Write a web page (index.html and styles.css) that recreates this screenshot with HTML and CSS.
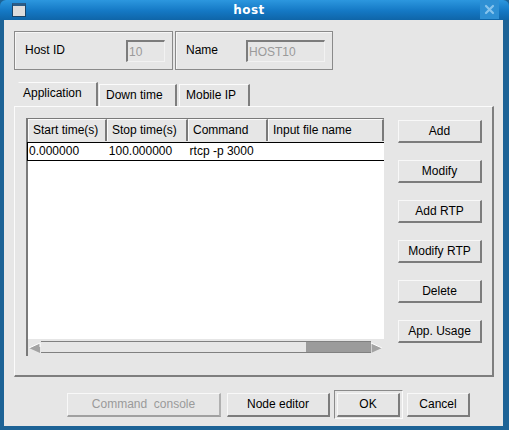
FILE: index.html
```html
<!DOCTYPE html>
<html lang="en">
<head>
  <meta charset="UTF-8" />
  <title>host</title>
  <link rel="stylesheet" href="styles.css">
</head>
<body>
  <div class="window">
    <div class="titlebar">
      <div class="win-icon"></div>
      <div class="title">host</div>
      <div class="close">
        <svg width="11" height="11" viewBox="0 0 11 11">
          <path d="M2 2 L9 9 M9 2 L2 9" stroke="#86c3ec" stroke-width="2.2" stroke-linecap="round" />
        </svg>
      </div>
    </div>

    <div class="content">
      <div class="top-row">
        <div class="group host-id">
          <span class="label">Host ID</span>
          <div class="entry id-entry">10</div>
        </div>
        <div class="group host-name">
          <span class="label">Name</span>
          <div class="entry name-entry">HOST10</div>
        </div>
      </div>

      <div class="tabs">
        <div class="tab selected">Application</div>
        <div class="tab down">Down time</div>
        <div class="tab mobile">Mobile IP</div>
      </div>

      <div class="panel">
        <div class="table">
          <div class="thead">
            <div class="th c1">Start time(s)</div>
            <div class="th c2">Stop time(s)</div>
            <div class="th c3">Command</div>
            <div class="th c4">Input file name</div>
          </div>
          <div class="row">
            <div class="td c1">0.000000</div>
            <div class="td c2">100.000000</div>
            <div class="td c3">rtcp -p 3000</div>
            <div class="td c4"></div>
          </div>
          <div class="filler"></div>
          <div class="hscroll">
            <div class="arrow">
              <svg width="13" height="12" viewBox="0 0 13 12">
                <polygon points="1,6 12,1 12,11" fill="#a3a3a3" />
                <polyline points="1,6 12,1 12,5" fill="none" stroke="#fff" stroke-width="1" />
              </svg>
            </div>
            <div class="trough"><div class="thumb"></div></div>
            <div class="arrow">
              <svg width="12" height="12" viewBox="0 0 12 12">
                <polygon points="11,6 0,1 0,11" fill="#a3a3a3" />
                <polyline points="0,11 0,1 11,6" fill="none" stroke="#fff" stroke-width="1" />
              </svg>
            </div>
          </div>
        </div>

        <div class="side-buttons">
          <div class="btn">Add</div>
          <div class="btn">Modify</div>
          <div class="btn">Add RTP</div>
          <div class="btn">Modify RTP</div>
          <div class="btn">Delete</div>
          <div class="btn">App. Usage</div>
        </div>
      </div>

      <div class="bottom-row">
        <div class="btn wide disabled">Command&nbsp; console</div>
        <div class="btn node">Node editor</div>
        <div class="default-frame"><div class="btn ok">OK</div></div>
        <div class="btn cancel">Cancel</div>
      </div>
    </div>
  </div>
</body>
</html>
```

FILE: styles.css
```css
html, body {
  margin: 0;
  padding: 0;
  background: #1d6396;
}
body {
  font-family: "Liberation Sans", Arial, sans-serif;
  font-size: 12px;
  color: #000;
}
.window {
  width: 509px;
  height: 430px;
  display: flex;
  flex-direction: column;
  background: #1d6396;
}

/* Title bar */
.titlebar {
  height: 20px;
  display: flex;
  align-items: center;
  border-radius: 6px 6px 0 0;
  background: linear-gradient(#2c97df, #1478c4 55%, #0f65a8);
}
.win-icon {
  width: 12px;
  height: 10px;
  margin-left: 12px;
  border: 1px solid #1b4468;
  border-top-width: 3px;
  border-top-color: #2a5c88;
  background: #dcdcdc;
}
.title {
  flex: 1;
  text-align: center;
  font-family: "DejaVu Sans", sans-serif;
  font-weight: bold;
  font-size: 12px;
  letter-spacing: 0.5px;
  color: #fff;
  padding-right: 8px;
}
.close {
  width: 19px;
  height: 19px;
  margin-right: 10px;
  align-self: flex-start;
  background: #2f90d4;
  display: flex;
  align-items: center;
  justify-content: center;
}

/* Client area */
.content {
  flex: 1;
  background: #e6e6e6;
  border-left: 4px solid #1d6396;
  border-right: 6px solid #1d6396;
  border-bottom: 4px solid #1d6396;
  padding: 11px 9px 0 10px;
}
.top-row {
  display: flex;
  gap: 2px;
}
.group {
  height: 37px;
  border: 1px solid #8a8a8a;
  box-shadow: inset 1px 1px 0 #f6f6f6;
  display: flex;
  align-items: center;
}
.host-id { width: 157px; }
.host-name { width: 156px; }
.label {
  margin-left: 10px;
  margin-top: -2px;
}
.entry {
  box-sizing: border-box;
  height: 22px;
  line-height: 21px;
  border-top: 2px solid #7c7c7c;
  border-left: 2px solid #7c7c7c;
  border-right: 1px solid #f2f2f2;
  border-bottom: 1px solid #f2f2f2;
  color: #9a9a9a;
  padding-left: 1px;
}
.id-entry {
  width: 39px;
  margin-left: 61px;
}
.name-entry {
  width: 79px;
  margin-left: 28px;
}

/* Tabs */
.tabs {
  display: flex;
  align-items: flex-end;
  height: 24px;
  margin-top: 12px;
  padding-left: 4px;
}
.tab {
  box-sizing: border-box;
  height: 22px;
  line-height: 21px;
  padding-left: 6px;
  border-top: 1px solid #fbfbfb;
  border-left: 1px solid #fbfbfb;
  border-right: 2px solid #7e7e7e;
  margin-right: 2px;
  white-space: nowrap;
}
.tab.selected {
  width: 80px;
  height: 24px;
  padding-left: 4px;
  margin-right: 1px;
  border-left-color: #e6e6e6;
}
.tab.down { width: 78px; }
.tab.mobile { width: 71px; }

/* Panel */
.panel {
  height: 257px;
  border-top: 1px solid #fbfbfb;
  border-left: 1px solid #fbfbfb;
  border-right: 2px solid #7e7e7e;
  border-bottom: 2px solid #7e7e7e;
  padding: 11px 0 0 11px;
  display: flex;
  align-items: flex-start;
}
.table {
  width: 356px;
  height: 238px;
  border-left: 2px solid #7a7a7a;
  display: flex;
  flex-direction: column;
}
.thead {
  display: flex;
  height: 23px;
  border-top: 1px solid #7a7a7a;
}
.th {
  box-sizing: border-box;
  height: 22px;
  line-height: 21px;
  padding-left: 4px;
  border-top: 1px solid #fbfbfb;
  border-left: 1px solid #fbfbfb;
  border-right: 2px solid #7a7a7a;
  white-space: nowrap;
  overflow: hidden;
}
.c1 { width: 79px; }
.c2 { width: 81px; }
.c3 { width: 80px; }
.c4 { width: 116px; }
.row {
  display: flex;
  height: 17px;
  background: #fff;
  border-top: 1px solid #000;
  border-bottom: 1px solid #000;
  border-left: 1px solid #000;
  margin-left: -1px;
}
.td {
  box-sizing: border-box;
  line-height: 17px;
  padding-left: 1px;
  white-space: nowrap;
}
.row .c1 { width: 80px; }
.filler {
  flex: 1;
  background: #fff;
  border-bottom: 2px solid #e6e6e6;
}
.hscroll {
  height: 15px;
  display: flex;
}
.arrow {
  width: 13px;
  height: 12px;
  margin-top: 1px;
}
.trough {
  flex: 1;
  height: 10px;
  border-top: 1px solid #808080;
  border-bottom: 1px solid #808080;
  background: #e6e6e6;
  display: flex;
  justify-content: flex-end;
}
.thumb {
  width: 65px;
  height: 10px;
  background: #9b9b9b;
}

/* Buttons */
.side-buttons {
  margin-left: 14px;
  margin-top: 2px;
  display: flex;
  flex-direction: column;
  gap: 17px;
}
.btn {
  box-sizing: border-box;
  height: 23px;
  line-height: 20px;
  text-align: center;
  border-top: 1px solid #f8f8f8;
  border-left: 1px solid #f8f8f8;
  border-right: 2px solid #7c7c7c;
  border-bottom: 2px solid #7c7c7c;
}
.side-buttons .btn { width: 84px; }

.bottom-row {
  display: flex;
  align-items: center;
  margin-top: 13px;
  padding-left: 53px;
  height: 29px;
}
.bottom-row .btn {
  height: 24px;
  line-height: 21px;
}
.btn.wide { width: 154px; }
.btn.disabled {
  color: #9a9a9a;
  border-right-color: #b0b0b0;
  border-bottom-color: #a0a0a0;
}
.btn.node {
  width: 103px;
  margin-left: 6px;
}
.default-frame {
  margin-left: 4px;
  width: 69px;
  height: 29px;
  box-sizing: border-box;
  border-top: 1px solid #8a8a8a;
  border-left: 1px solid #8a8a8a;
  border-right: 1px solid #fbfbfb;
  border-bottom: 1px solid #fbfbfb;
  padding: 2px 0 0 2px;
}
.btn.ok { width: 63px; }
.btn.cancel {
  width: 63px;
  margin-left: 4px;
}
```
